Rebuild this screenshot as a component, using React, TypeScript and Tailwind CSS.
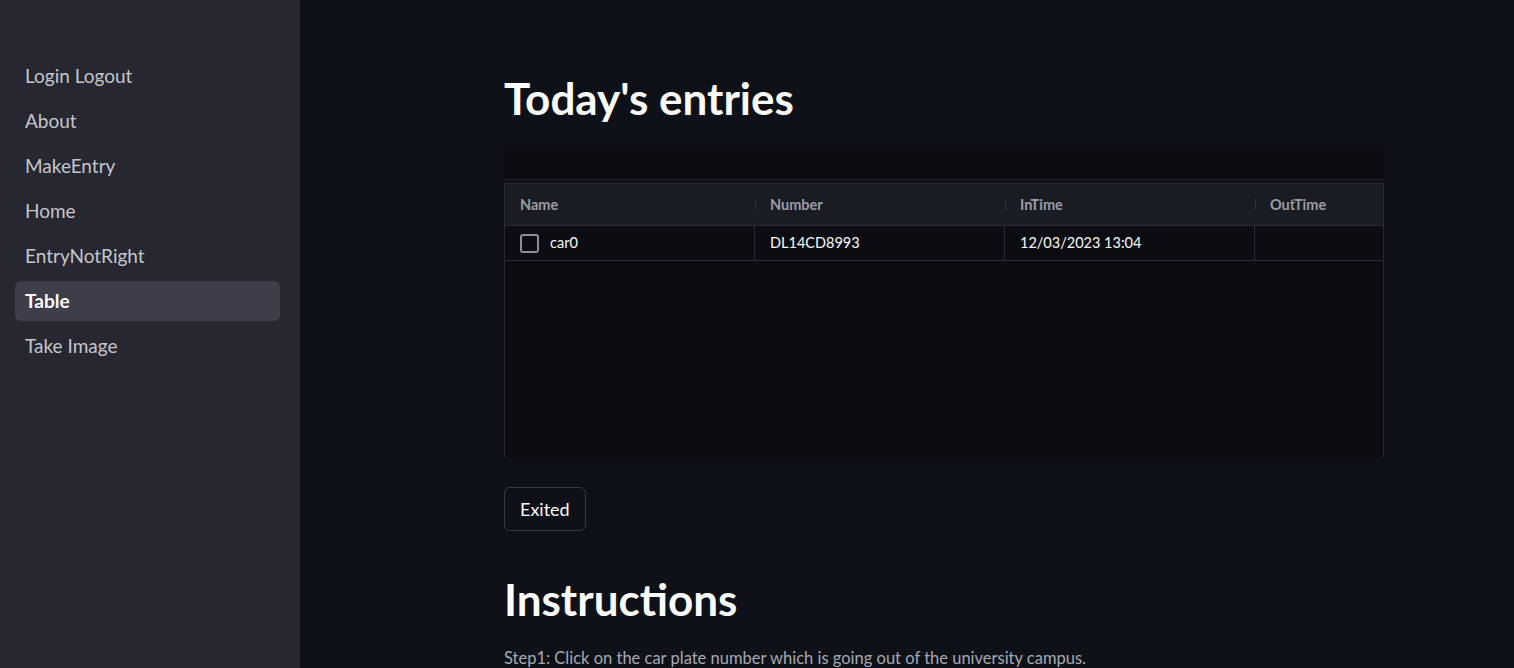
import React from "react";

const navItems = ["Login Logout", "About", "MakeEntry", "Home", "EntryNotRight", "Table", "Take Image"];

export default function App() {
  return (
    <div
      className="flex w-[1514px] h-[668px] overflow-hidden bg-[#0e1117]"
      style={{ fontFamily: "Lato, 'Noto Sans', sans-serif" }}
    >
      <aside className="w-[300px] shrink-0 bg-[#262730] pt-[56px] px-[15px]">
        <nav className="flex flex-col gap-[5px]">
          {navItems.map((item) => {
            const active = item === "Table";
            return (
              <div
                key={item}
                className={
                  "h-[40px] w-[265px] flex items-center px-[10px] rounded-[6px] text-[19px] " +
                  (active ? "bg-[#3d3e4a] text-[#fafafa] font-bold" : "text-[#c5c6cc]")
                }
              >
                {item}
              </div>
            );
          })}
        </nav>
      </aside>
      <main className="flex-1 pl-[204px]">
        <div className="w-[880px] pt-[70px]">
          <h1 className="text-[44px] font-bold text-[#fafafa] leading-[56px]">Today's entries</h1>
          <div className="mt-[19px]">
            <div className="h-[35px] bg-[#0b0d12] border-b border-[#1f2128]"></div>
            <div className="mt-[3px] border-x border-t border-[#262830] h-[275px] bg-[#0b0d12]">
              <div className="flex h-[42px] bg-[#1a1c24] border-b border-[#2a2c35] text-[14.5px] text-[#9a9ca5] font-bold">
                {["Name", "Number", "InTime", "OutTime"].map((h, i) => (
                  <div key={h} className={"flex items-center relative " + (i < 3 ? "w-[250px]" : "flex-1")}>
                    {i > 0 && <span className="absolute left-0 top-[15px] h-[11px] w-px bg-[#33353e]"></span>}
                    <span className="pl-[15px]">{h}</span>
                  </div>
                ))}
              </div>
              <div className="flex h-[35px] border-b border-[#2a2c35] text-[14.5px] text-[#fafafa]">
                <div className="w-[250px] flex items-center pl-[15px] gap-[11px] border-r border-[#2a2c35]">
                  <span className="w-[19px] h-[19px] rounded-[3px] border-2 border-[#8c8e96]"></span>
                  <span>car0</span>
                </div>
                <div className="w-[250px] flex items-center pl-[15px] border-r border-[#2a2c35]">DL14CD8993</div>
                <div className="w-[250px] flex items-center pl-[15px] border-r border-[#2a2c35]">12/03/2023 13:04</div>
                <div className="flex-1"></div>
              </div>
            </div>
          </div>
          <button className="mt-[29px] h-[44px] px-[15px] rounded-[6px] border border-[#373943] bg-[#0e1117] text-[#fafafa] text-[18px]">
            Exited
          </button>
          <h1 className="mt-[40px] text-[44px] font-bold text-[#fafafa] leading-[56px]">Instructions</h1>
          <p className="mt-[19px] text-[16.5px] leading-[24px] text-[#a6a9b2]">
            Step1: Click on the car plate number which is going out of the university campus.
          </p>
        </div>
      </main>
    </div>
  );
}
